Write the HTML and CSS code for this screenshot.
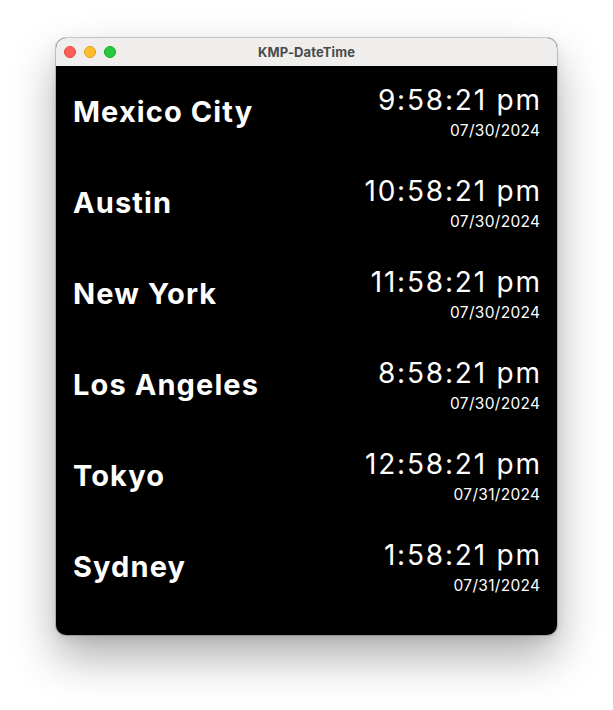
FILE: index.html
```html
<!DOCTYPE html>
<html>
<head>
<meta charset="utf-8">
<link rel="stylesheet" href="styles.css">
</head>
<body>
<div class="window">
  <div class="titlebar">
    <div class="lights">
      <span class="light red"></span>
      <span class="light yellow"></span>
      <span class="light green"></span>
    </div>
    <div class="title">KMP-DateTime</div>
  </div>
  <div class="content">
    <div class="row"><div class="city">Mexico City</div><div class="clock"><div class="time">9:58:21 pm</div><div class="date">07/30/2024</div></div></div>
    <div class="row"><div class="city">Austin</div><div class="clock"><div class="time">10:58:21 pm</div><div class="date">07/30/2024</div></div></div>
    <div class="row"><div class="city">New York</div><div class="clock"><div class="time">11:58:21 pm</div><div class="date">07/30/2024</div></div></div>
    <div class="row"><div class="city">Los Angeles</div><div class="clock"><div class="time">8:58:21 pm</div><div class="date">07/30/2024</div></div></div>
    <div class="row"><div class="city">Tokyo</div><div class="clock"><div class="time">12:58:21 pm</div><div class="date">07/31/2024</div></div></div>
    <div class="row"><div class="city">Sydney</div><div class="clock"><div class="time">1:58:21 pm</div><div class="date">07/31/2024</div></div></div>
  </div>
</div>
</body>
</html>
```
FILE: styles.css
```css
html, body {
  margin: 0;
  padding: 0;
  background: #ffffff;
}
body {
  width: 613px;
  height: 710px;
  overflow: hidden;
  padding-top: 38px;
  box-sizing: border-box;
  font-family: Inter, "Noto Sans", sans-serif;
}
.window {
  margin-left: 56px;
  width: 501px;
  height: 597px;
  border-radius: 10px;
  overflow: hidden;
  background: #000;
  box-shadow: 0 0 0 1px rgba(0,0,0,0.18), 0 22px 45px rgba(0,0,0,0.32), 0 4px 10px rgba(0,0,0,0.08);
  display: flex;
  flex-direction: column;
}
.titlebar {
  height: 28px;
  background: #efeeed;
  position: relative;
  display: flex;
  align-items: center;
  justify-content: center;
  flex-shrink: 0;
}
.lights {
  position: absolute;
  left: 8px;
  top: 8px;
  display: flex;
  gap: 8px;
}
.light {
  width: 12px;
  height: 12px;
  border-radius: 50%;
  box-sizing: border-box;
}
.red { background: #fe5f57; border: 0.5px solid #e2463f; }
.yellow { background: #febc2e; border: 0.5px solid #e1a116; }
.green { background: #28c840; border: 0.5px solid #12ac28; }
.title {
  font-size: 13px;
  font-weight: 700;
  color: #4b4b4b;
  letter-spacing: 0.1px;
}
.content {
  flex: 1;
  padding: 0 17px;
  display: flex;
  flex-direction: column;
}
.row {
  height: 91px;
  display: flex;
  align-items: center;
  justify-content: space-between;
  flex-shrink: 0;
}
.city {
  color: #fff;
  font-size: 29px;
  font-weight: 700;
  letter-spacing: 1.1px;
}
.clock {
  display: flex;
  flex-direction: column;
  align-items: flex-end;
  color: #fff;
  margin-top: 2px;
}
.time {
  font-size: 28px;
  font-weight: 400;
  line-height: 32px;
  letter-spacing: 1.8px;
  margin-right: -1.8px;
}
.date {
  font-size: 15.5px;
  line-height: 20px;
  margin-top: 5px;
  letter-spacing: 0.3px;
  margin-right: -0.3px;
}
```
